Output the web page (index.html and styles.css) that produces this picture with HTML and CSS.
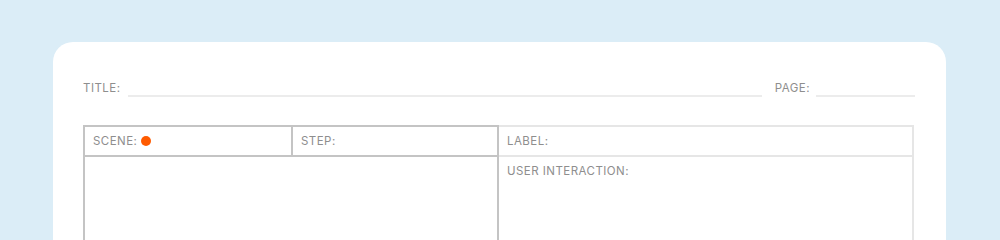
FILE: index.html
```html
<!DOCTYPE html>
<html lang="en">

<head>
    <meta charset="UTF-8">
    <meta name="viewport" content="width=device-width, initial-scale=1.0">
    <title>Storyboard Sheet</title>
    <link rel="stylesheet" href="styles.css">
</head>

<body>
    <div class="sheet">
        <!-- Title / page row -->
        <div class="meta-row">
            <span class="field-label">TITLE:</span>
            <span class="blank blank-title"></span>
            <span class="field-label page-label">PAGE:</span>
            <span class="blank blank-page"></span>
        </div>

        <!-- Frame grid -->
        <div class="frame">
            <div class="frame-left">
                <div class="frame-head">
                    <div class="cell">SCENE: <span class="dot"></span></div>
                    <div class="cell">STEP:</div>
                </div>
                <div class="frame-body"></div>
            </div>
            <div class="frame-right">
                <div class="frame-head">
                    <div class="cell">LABEL:</div>
                </div>
                <div class="frame-body">
                    <div class="cell">USER INTERACTION:</div>
                </div>
            </div>
        </div>
    </div>
</body>

</html>
```

FILE: styles.css
```css
* {
    margin: 0;
    padding: 0;
    box-sizing: border-box;
}

html,
body {
    height: 240px;
    overflow: hidden;
}

body {
    font-family: 'Inter', 'Liberation Sans', sans-serif;
    background-color: #dbedf7;
    color: #8e8e8e;
    padding: 42px 54px 0 53px;
}

/* Card */
.sheet {
    background-color: #fff;
    border-radius: 20px 20px 0 0;
    padding: 34px 31px 0 30px;
    height: 198px;
    overflow: hidden;
}

.field-label {
    font-size: 11.5px;
    letter-spacing: 0.04em;
    white-space: nowrap;
    padding-bottom: 2px;
}

/* Title row */
.meta-row {
    display: flex;
    align-items: flex-end;
    height: 21px;
}

.blank {
    border-bottom: 2px solid #ececec;
    height: 2px;
}

.blank-title {
    flex: 1;
    margin-left: 8px;
}

.page-label {
    margin-left: 13px;
}

.blank-page {
    width: 99px;
    margin-left: 6px;
}

/* Frame grid */
.frame {
    display: grid;
    grid-template-columns: 416px 415px;
    margin-top: 28px;
}

.frame-left {
    border: 2px solid #c4c4c4;
    border-bottom: none;
}

.frame-right {
    border: 2px solid #e6e6e6;
    border-left: none;
    border-bottom: none;
}

.frame-head {
    display: grid;
    grid-template-columns: 1fr 1fr;
    height: 30px;
}

.frame-right .frame-head {
    grid-template-columns: 1fr;
    border-bottom: 2px solid #e6e6e6;
}

.frame-left .frame-head {
    border-bottom: 2px solid #c4c4c4;
}

.frame-left .frame-head .cell + .cell {
    border-left: 2px solid #c4c4c4;
}

.cell {
    font-size: 11.5px;
    letter-spacing: 0.04em;
    padding: 7px 0 0 8px;
    display: flex;
    align-items: flex-start;
    gap: 4px;
}

.frame-body {
    height: 100px;
}

.dot {
    display: inline-block;
    width: 10px;
    height: 10px;
    border-radius: 50%;
    background-color: #ff5b00;
    margin-top: 2px;
}
```
